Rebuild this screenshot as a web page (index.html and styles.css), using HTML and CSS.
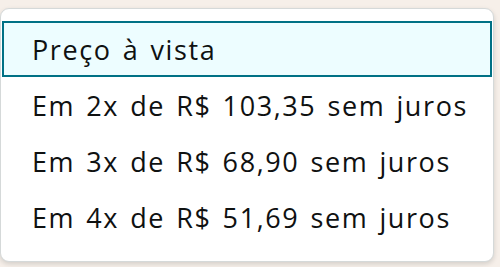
FILE: index.html
```html
<!DOCTYPE html>
<html lang="pt-BR">
<head>
<meta charset="utf-8">
<link rel="stylesheet" href="styles.css">
</head>
<body>
<div class="page">
  <ul class="menu">
    <li class="item selected">Preço à vista</li>
    <li class="item">Em 2x de R$ 103,35 sem juros</li>
    <li class="item">Em 3x de R$ 68,90 sem juros</li>
    <li class="item">Em 4x de R$ 51,69 sem juros</li>
  </ul>
</div>
</body>
</html>
```
FILE: styles.css
```css
html, body {
  margin: 0;
  padding: 0;
}
body {
  width: 500px;
  height: 267px;
  background: #f6efe9;
  overflow: hidden;
  font-family: "Open Sans", "Noto Sans", sans-serif;
}
.page {
  padding: 8px 6px 0 0;
}
.menu {
  list-style: none;
  margin: 0;
  padding: 12px 0 12px 0;
  background: #fff;
  border: 1px solid #d5d9d9;
  border-radius: 9px;
  box-shadow: 0 2px 5px rgba(15, 17, 17, 0.15);
  height: 228px;
}
.item {
  height: 56px;
  display: flex;
  align-items: center;
  padding-left: 28px;
  font-size: 27px;
  letter-spacing: 1.6px;
  word-spacing: 2.5px;
  color: #0f1111;
  box-sizing: border-box;
  border: 2px solid transparent;
  margin: 0 1px;
}
.item.selected {
  background: #edfdff;
  border-color: #007185;
}
```
